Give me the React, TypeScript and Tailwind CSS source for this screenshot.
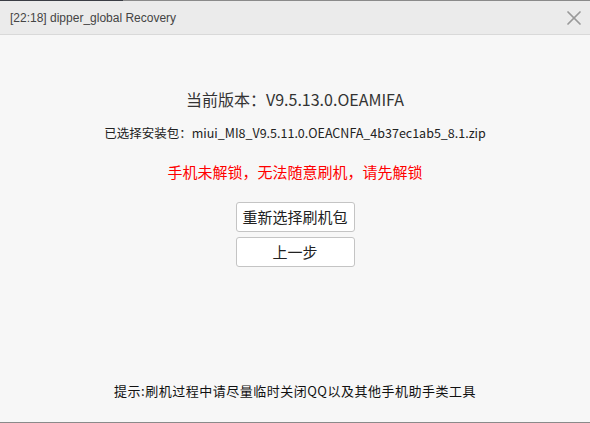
import { X } from 'lucide-react';

const cjk = "font-['Microsoft_YaHei','Noto_Sans_CJK_SC','Noto_Sans',sans-serif]";

export default function App() {
  return (
    <div className={`w-[590px] h-[423px] flex flex-col bg-[#f7f7f7] text-[#222] overflow-hidden ${cjk}`}>
      <div className="flex h-[1px] shrink-0">
        <div className="w-[123px] bg-[#3a3d44]" />
        <div className="flex-1 bg-[#8a8a8a]" />
      </div>
      <div className="h-[34px] shrink-0 flex items-center justify-between pl-[10px] pr-[4px] bg-[#ebebeb] border-b border-[#d9d9d9]">
        <span className="text-[12px] text-[#444] font-['Liberation_Sans',sans-serif]">[22:18] dipper_global Recovery</span>
        <X className="w-[24px] h-[24px] text-[#999]" strokeWidth={1.7} />
      </div>
      <div className="flex-1 flex flex-col items-center">
        <div className="mt-[52px] text-[16px] leading-[24px] text-[#333]">当前版本：V9.5.13.0.OEAMIFA</div>
        <div className="mt-[13px] text-[12.5px] leading-[18px] text-[#222]">已选择安装包：miui_MI8_V9.5.11.0.OEACNFA_4b37ec1ab5_8.1.zip</div>
        <div className="mt-[20px] text-[15px] leading-[20px] text-[#ff0000]">手机未解锁，无法随意刷机，请先解锁</div>
        <div className="mt-[20px] flex flex-col gap-[5px]">
          <button className="w-[119px] h-[30px] bg-white border border-[#c4c4c4] rounded-[3px] text-[15px] text-[#222]">重新选择刷机包</button>
          <button className="w-[119px] h-[30px] bg-white border border-[#c4c4c4] rounded-[3px] text-[15px] text-[#222]">上一步</button>
        </div>
        <div className="mt-auto mb-[21px] text-[13px] leading-[20px] text-[#111] tracking-[0.5px]">提示:刷机过程中请尽量临时关闭QQ以及其他手机助手类工具</div>
      </div>
      <div className="h-[1px] shrink-0 bg-[#8a8a8a]" />
    </div>
  );
}
